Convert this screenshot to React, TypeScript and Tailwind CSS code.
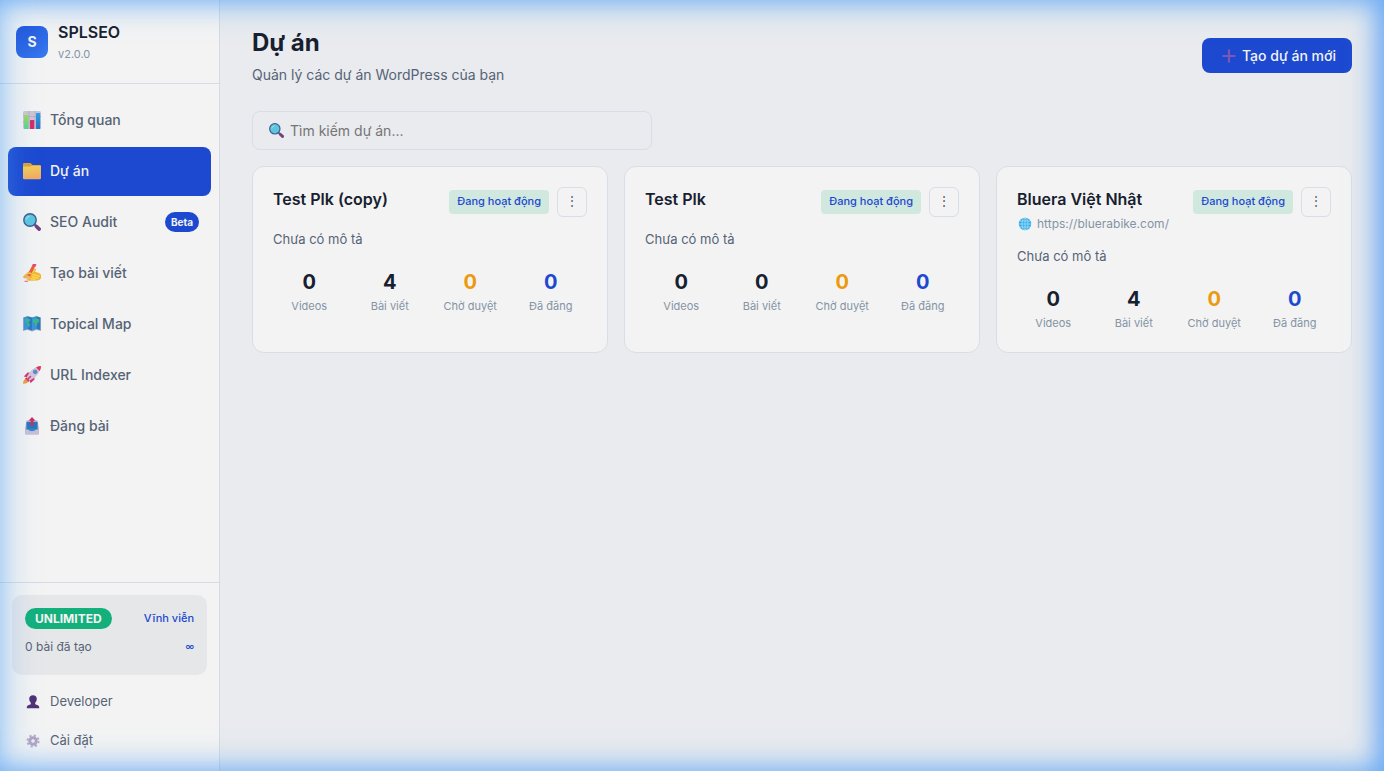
import React from "react";

type IconProps = { className?: string };

function ChartIcon({ className }: IconProps) {
  return (
    <svg viewBox="0 0 18 18" className={className} aria-hidden="true">
      <defs>
        <linearGradient id="chart-green" x1="0" y1="0" x2="0" y2="1">
          <stop offset="0" stopColor="#9fdc55" />
          <stop offset="1" stopColor="#5fcf9a" />
        </linearGradient>
        <linearGradient id="chart-blue" x1="0" y1="0" x2="0" y2="1">
          <stop offset="0" stopColor="#2f9fe8" />
          <stop offset="1" stopColor="#2b72c4" />
        </linearGradient>
      </defs>
      <rect width="18" height="18" rx="1.5" fill="#cdc5d6" />
      <path d="M0 5.5h18M0 11h18M6 0v18M12 0v18" stroke="#b3aabd" strokeWidth="0.8" />
      <rect x="1" y="4" width="4.5" height="14" rx="0.5" fill="url(#chart-green)" />
      <rect x="7" y="9" width="4.2" height="9" rx="0.5" fill="#d32a6c" />
      <rect x="13" y="2" width="4.2" height="16" rx="0.5" fill="url(#chart-blue)" />
    </svg>
  );
}

function FolderIcon({ className }: IconProps) {
  return (
    <svg viewBox="0 0 18 18" className={className} aria-hidden="true">
      <defs>
        <linearGradient id="folder-front" x1="0" y1="0" x2="0.3" y2="1">
          <stop offset="0" stopColor="#f5d352" />
          <stop offset="1" stopColor="#f2ab62" />
        </linearGradient>
      </defs>
      <path d="M0 2.2Q0 1 1.2 1H7.500l2 2h7.300Q18 3 18 4.200V8H0Z" fill="#dba138" />
      <path d="M0 5.300Q0 4.600.8 4.600H7.500L9 3.800h8Q18 3.800 18 4.800V16q0 1.200-1.200 1.200H1.200Q0 17.200 0 16Z" fill="url(#folder-front)" />
    </svg>
  );
}

function SearchIcon({ className }: IconProps) {
  return (
    <svg viewBox="0 0 18 18" className={className} aria-hidden="true">
      <path d="M11.500 11.500l2 2" stroke="#6a4a86" strokeWidth="2" />
      <path d="M13.500 13.500l2.700 2.600" stroke="#71437f" strokeWidth="3.600" strokeLinecap="round" />
      <circle cx="7" cy="7" r="6.200" fill="#5cc6df" stroke="#3f5a8f" strokeWidth="1.400" />
      <path d="M3.300 6.200A4 4 0 0 1 6.200 3.200" stroke="#9be3f0" strokeWidth="1.100" fill="none" strokeLinecap="round" />
    </svg>
  );
}

function WritingIcon({ className }: IconProps) {
  return (
    <svg viewBox="0 0 18 18" className={className} aria-hidden="true">
      <path d="M.3 12.200 4 9Q5.500 7 8 6.500L11.500 4.700Q13.500 4.500 13 6.300L11.800 7.500 16.500 9.300Q18.500 10.500 18.300 13.500 17.500 16.300 14.500 16.500L6 16.700Q4 16.500 4.800 15L6.500 13.200 1.500 14.500Q-.5 14 .3 12.200Z" fill="#f3b437" />
      <path d="M8 9 11.500 6.500M10 10.500 16 12.200M9.500 12.800 15 14.300M8 14.800 12 15.200" stroke="#f9d74e" strokeWidth="1.500" strokeLinecap="round" />
      <path d="M11.300.8 5.500 12" stroke="#f05a3c" strokeWidth="3" />
      <path d="M12-.2 10.900 2" stroke="#e2477a" strokeWidth="3.200" />
      <path d="M4.200 11.300 6.900 12.700 3.300 16.800Z" fill="#f3b48c" />
      <path d="M1.500 17.300h3.500" stroke="#f05a6c" strokeWidth="1" />
      <path d="M4 9.500Q7 8.500 8.500 10" stroke="#f6c545" strokeWidth="1.600" fill="none" />
    </svg>
  );
}

function MapIcon({ className }: IconProps) {
  return (
    <svg viewBox="0 0 18 18" className={className} aria-hidden="true">
      <path d="M0 2.500 4.500 1.200 9 2.500 13.500 1.200 18 2.500V16L13.500 14.800 9 16.500 4.500 14.800 0 16Z" fill="#9aa6c4" />
      <path d="M.8 2.500 4.500 1.200V14L.8 15ZM9 2.500 13.500 1.200V14L9 15.500Z" fill="#3a92da" />
      <path d="M4.500 1.200 9 2.500V15.500L4.500 14ZM13.500 1.200 17.200 2.500V15L13.500 14Z" fill="#2a78bf" />
      <path d="M2 4 5 3.500 7.300 4.500 6.500 6.500 5 7 6.800 9 6 12 5 12.300 4.300 8.800 2.600 6.500ZM10 4.800 12 3.500 16 4 16.300 7 14.700 7.500 14 10 12.500 11.500 11.500 8.200 10 7Z" fill="#37b78a" />
    </svg>
  );
}

function RocketIcon({ className }: IconProps) {
  return (
    <svg viewBox="0 0 18 18" className={className} aria-hidden="true">
      <path d="M.8 10.500 4.500 6.500 8 6.800 5 11.500ZM7.500 17.200 11.500 13.500 11.200 10 6.500 13Z" fill="#d8346e" />
      <path d="M0 17.700Q.2 13.800 2.500 12.700L5.300 15.500Q4.200 17.800 0 17.700Z" fill="#f59a35" />
      <path d="M3.500 11.500Q7 4.500 12 1.800L17.800.2 16.200 6Q13.500 11.500 6.500 14.500Z" fill="#d0c7dc" />
      <path d="M13 1.400Q15.500 0 18 0 18 3 16.600 5Z" fill="#e0335a" />
      <path d="M2.700 11.800 6.200 15.300" stroke="#d8346e" strokeWidth="1.800" />
      <path d="M5 13 7.500 10.500" stroke="#e0335a" strokeWidth="1.500" strokeLinecap="round" />
      <circle cx="12.200" cy="5.800" r="1.900" fill="#4b93dc" stroke="#6b73a8" strokeWidth="0.700" />
    </svg>
  );
}

function OutboxIcon({ className }: IconProps) {
  return (
    <svg viewBox="0 0 18 18" className={className} aria-hidden="true">
      <path d="M3.500 3.500h11L16 12v4.500q0 1-1 1H3q-1 0-1-1V12Z" fill="#b9acc9" />
      <path d="M3.500 5h11V13h-11Z" fill="#2478bd" />
      <path d="M2.200 12.500h3.300l1.500 1.800h4l1.500-1.800h3.300v3.700q0 1-1 1H3.200q-1 0-1-1Z" fill="#c9bfd6" />
      <path d="M5.500 11.800h7l-1.300 2.200H6.800Z" fill="#2d8ad0" />
      <path d="M9 0 12.500 3.800H10.300V9H7.700V3.800H5.500Z" fill="#cf2c5f" />
    </svg>
  );
}

function PersonIcon({ className }: IconProps) {
  return (
    <svg viewBox="0 0 14 14" className={className} aria-hidden="true">
      <path d="M7 .3C9.300.3 10.900 1.900 10.800 4.100 10.700 6 9.900 7 9.200 7.700V9.200L12.300 10.600Q13.300 11.200 13.300 13.300H.7Q.7 11.200 1.700 10.600L4.800 9.200V7.700C4.100 7 3.300 6 3.200 4.100 3.100 1.900 4.700.3 7 .3Z" fill="#4e3273" />
    </svg>
  );
}

function GearIcon({ className }: IconProps) {
  return (
    <svg viewBox="0 0 14 14" className={className} aria-hidden="true">
      <circle cx="7" cy="7" r="5.600" fill="none" stroke="#b8acca" strokeWidth="2" strokeDasharray="2.200 2.200" />
      <circle cx="7" cy="7" r="3.700" fill="none" stroke="#b0a3c3" strokeWidth="2.200" />
      <circle cx="7" cy="7" r="2.400" fill="#efedf2" stroke="#86779f" strokeWidth="0.700" />
    </svg>
  );
}

function GlobeIcon({ className }: IconProps) {
  return (
    <svg viewBox="0 0 14 14" className={className} aria-hidden="true">
      <circle cx="7" cy="7" r="6.200" fill="#35abe8" />
      <path d="M1 7h12M2 4h10M2 10h10M7 1v12" stroke="#a5def7" strokeWidth="0.800" />
      <ellipse cx="7" cy="7" rx="3" ry="6" fill="none" stroke="#a5def7" strokeWidth="0.800" />
    </svg>
  );
}

function PlusIcon({ className }: IconProps) {
  return (
    <svg viewBox="0 0 14 14" className={className} aria-hidden="true">
      <path d="M7 .5v13M.5 7h13" stroke="#7c57b4" strokeWidth="2.200" />
    </svg>
  );
}

const navItems = [
  { label: "Tổng quan", Icon: ChartIcon },
  { label: "Dự án", Icon: FolderIcon, active: true },
  { label: "SEO Audit", Icon: SearchIcon, badge: "Beta" },
  { label: "Tạo bài viết", Icon: WritingIcon },
  { label: "Topical Map", Icon: MapIcon },
  { label: "URL Indexer", Icon: RocketIcon },
  { label: "Đăng bài", Icon: OutboxIcon },
];

const footerItems = [
  { label: "Developer", Icon: PersonIcon },
  { label: "Cài đặt", Icon: GearIcon },
];

type Project = { name: string; url?: string; videos: number; posts: number; pending: number; published: number };

const projects: Project[] = [
  { name: "Test Plk (copy)", videos: 0, posts: 4, pending: 0, published: 0 },
  { name: "Test Plk", videos: 0, posts: 0, pending: 0, published: 0 },
  { name: "Bluera Việt Nhật", url: "https://bluerabike.com/", videos: 0, posts: 4, pending: 0, published: 0 },
];

function Stat({ value, label, color }: { value: number; label: string; color: string }) {
  return (
    <div className="flex flex-col items-center">
      <span className={`text-xl leading-8 font-bold ${color}`}>{value}</span>
      <span className="text-[11px] leading-4 text-[#8493a5]">{label}</span>
    </div>
  );
}

function ProjectCard({ project }: { project: Project }) {
  return (
    <article className="rounded-xl border border-[#d8dee7] bg-[#f3f3f3] px-5 pt-5 pb-[21px]">
      <div className="flex items-start justify-between">
        <div>
          <h2 className="text-base leading-6 font-semibold text-[#17202f]">{project.name}</h2>
          {project.url && (
            <a href={project.url} className="mt-[2px] flex items-center gap-[5px] text-xs leading-[21px] text-[#8493a5]">
              <GlobeIcon className="ml-px size-[14px]" />
              {project.url}
            </a>
          )}
        </div>
        <div className="flex items-center gap-2">
          <span className="rounded bg-[#d1e8df] px-2 pb-[2px] text-[11px] leading-[22px] font-medium text-[#1c49d0]">Đang hoạt động</span>
          <button type="button" aria-label="Tùy chọn" className="flex size-[30px] items-center justify-center rounded-md border border-[#d8dee7] pb-[2px] text-xs text-[#475569]">
            ⋮
          </button>
        </div>
      </div>
      <p className="mt-3 text-[13px] leading-5 text-[#566376]">Chưa có mô tả</p>
      <div className="mt-[17px] grid grid-cols-4 gap-2">
        <Stat value={project.videos} label="Videos" color="text-[#17202f]" />
        <Stat value={project.posts} label="Bài viết" color="text-[#17202f]" />
        <Stat value={project.pending} label="Chờ duyệt" color="text-[#ea9a0c]" />
        <Stat value={project.published} label="Đã đăng" color="text-[#1c49d0]" />
      </div>
    </article>
  );
}

export default function App() {
  return (
    <div className="flex min-h-screen bg-[#e9ebee] font-['Inter','Noto_Sans',sans-serif] text-[#17202f]">
      <aside className="flex w-[220px] shrink-0 flex-col border-r border-[#d5dae3] bg-[#f3f3f3]">
        <div className="flex items-center gap-[10px] border-b border-[#d5dae3] px-4 py-[19px]">
          <div className="flex size-8 items-center justify-center rounded-lg bg-linear-to-br from-[#1d4ed8] to-[#3b7cf0] text-sm font-bold text-[#f3f3f3]">S</div>
          <div>
            <div className="text-base leading-[26px] font-semibold">SPLSEO</div>
            <div className="text-[11px] leading-[19px] text-[#8493a5]">v2.0.0</div>
          </div>
        </div>
        <nav className="flex flex-1 flex-col gap-[2px] px-2 py-3">
          {navItems.map(({ label, Icon, badge, active }) => (
            <a
              key={label}
              href="#"
              aria-current={active ? "page" : undefined}
              className={`flex h-[49px] items-center gap-[9px] rounded-lg pr-3 pb-[2px] pl-[15px] text-sm font-medium ${active ? "bg-[#1c49d0] text-[#f3f3f3]" : "text-[#566376]"}`}
            >
              <Icon className="size-[18px]" />
              {label}
              {badge && <span className="ml-auto rounded-full bg-[#1c49d0] px-[6px] text-[10px] leading-5 font-bold text-[#f3f3f3]">{badge}</span>}
            </a>
          ))}
        </nav>
        <div className="border-t border-[#d5dae3] px-3 pt-3 pb-[11px]">
          <div className="mb-[7px] h-20 rounded-[10px] bg-[#e6e7e9] px-[13px] pt-[13px]">
            <div className="flex items-center justify-between">
              <span className="rounded-full bg-[#13b07c] px-[10px] text-xs leading-[21px] font-bold text-[#f3f3f3]">UNLIMITED</span>
              <span className="text-[11px] font-medium text-[#1c49d0]">Vĩnh viễn</span>
            </div>
            <div className="mt-2 flex items-center justify-between">
              <span className="text-xs leading-5 text-[#566376]">0 bài đã tạo</span>
              <span className="text-[9px] leading-5 font-medium text-[#1c49d0]">∞</span>
            </div>
          </div>
          {footerItems.map(({ label, Icon }) => (
            <a key={label} href="#" className="flex h-[39px] items-center gap-[10px] pl-[14px] text-[13px] text-[#566376]">
              <Icon className="size-[14px]" />
              {label}
            </a>
          ))}
        </div>
      </aside>

      <main className="min-w-0 flex-1 px-8 pt-6">
        <header className="flex items-center justify-between">
          <div>
            <h1 className="text-2xl leading-[38px] font-bold">Dự án</h1>
            <p className="mt-[2px] text-sm leading-[22px] text-[#566376]">Quản lý các dự án WordPress của bạn</p>
          </div>
          <button type="button" className="flex h-[35px] items-center gap-[6px] rounded-lg bg-[#1c49d0] pt-[2px] pr-4 pl-5 text-sm font-medium text-[#f3f3f3]">
            <PlusIcon className="size-[14px]" />
            Tạo dự án mới
          </button>
        </header>
        <label className="mt-[25px] flex h-[39px] w-full max-w-[400px] items-center gap-[6px] rounded-lg border border-[#d8dee7] px-4">
          <SearchIcon className="size-[15px] shrink-0" />
          <input
            type="search"
            aria-label="Tìm kiếm dự án"
            placeholder="Tìm kiếm dự án..."
            className="min-w-0 flex-1 bg-transparent text-sm outline-none placeholder:text-[#757575]"
          />
        </label>
        <section className="mt-4 grid grid-cols-3 gap-4">
          {projects.map((project) => (
            <ProjectCard key={project.name} project={project} />
          ))}
        </section>
      </main>

      <div className="pointer-events-none fixed inset-0 shadow-[inset_0_0_36px_rgba(85,170,246,0.6),inset_-8px_0_24px_-2px_rgba(59,130,246,0.6)]" />
    </div>
  );
}
